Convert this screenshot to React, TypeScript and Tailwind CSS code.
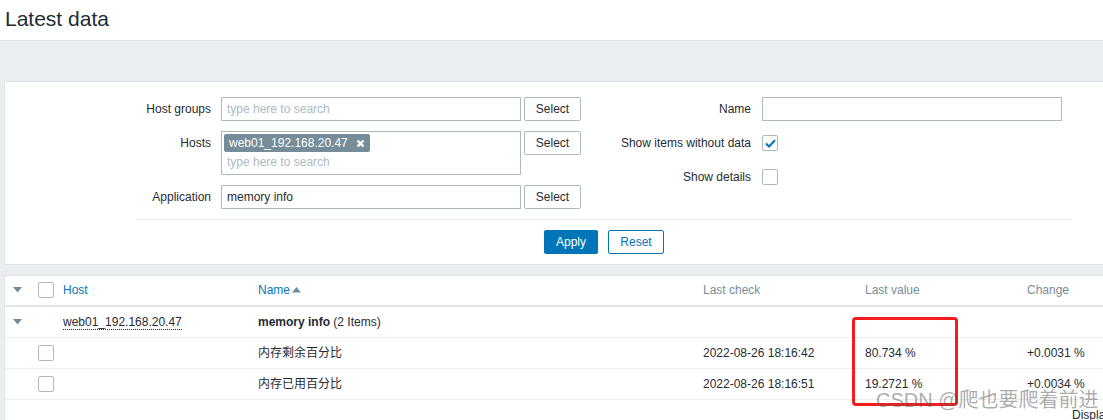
import React from "react";

const Arrow = () => (
  <svg width="9" height="6" viewBox="0 0 9 6" className="block">
    <polygon points="0,0 9,0 4.5,5.5" fill="#768d99" />
  </svg>
);

const Check = ({ checked = false }: { checked?: boolean }) => (
  <div className="w-[16px] h-[16px] border border-[#acbbc2] rounded-[2px] bg-white flex items-center justify-center">
    {checked && (
      <svg width="11" height="9" viewBox="0 0 11 9">
        <path d="M1 4.5 L4 7.5 L10 1.2" fill="none" stroke="#0275b8" strokeWidth="2" />
      </svg>
    )}
  </div>
);

const SelectBtn = () => (
  <button className="w-[57px] h-[24px] border border-[#acbbc2] rounded-[2px] bg-white text-[#1f2c33] text-[12px] leading-none">
    Select
  </button>
);

const Label = ({ children, w, pr }: { children: React.ReactNode; w: string; pr: string }) => (
  <div className={`${w} ${pr} text-right h-[24px] leading-[24px] shrink-0`}>{children}</div>
);

export default function App() {
  return (
    <div className="relative w-[1103px] h-[420px] overflow-hidden bg-[#ebeef0] text-[12px] text-[#1f2c33] font-['Liberation_Sans','Noto_Sans_CJK_SC',sans-serif]">
      {/* header */}
      <div className="h-[41px] bg-white border-b border-[#dfe4e7] flex items-center pl-[5px] pb-[4px]">
        <h1 className="text-[21px] leading-none text-[#1f2c33]">Latest data</h1>
      </div>

      {/* filter */}
      <div className="mt-[40px] ml-[4px] w-[1200px] bg-white border border-[#dfe4e7] pt-[15px] pb-[10px]">
        <div className="flex">
          <div className="flex flex-col gap-[10px]">
            <div className="flex">
              <div className="w-[216px] pr-[10px] text-right h-[24px] leading-[24px] shrink-0">Host groups</div>
              <div className="w-[300px] h-[24px] border border-[#acbbc2] pl-[5px] leading-[22px] text-[#acbbc2]">type here to search</div>
              <div className="ml-[3px]"><SelectBtn /></div>
            </div>
            <div className="flex">
              <div className="w-[216px] pr-[10px] text-right h-[24px] leading-[24px] shrink-0">Hosts</div>
              <div className="w-[300px] h-[44px] border border-[#acbbc2] pt-[2px] pl-[2px]">
                <div className="flex w-fit items-center h-[18px] bg-[#768d99] rounded-[2px] text-white pl-[5px] pr-[5px] gap-[8px]">
                  <span>web01_192.168.20.47</span>
                  <svg width="9" height="9" viewBox="0 0 9 9">
                    <path d="M1.5 1.5 L7.5 7.5 M7.5 1.5 L1.5 7.5" stroke="white" strokeWidth="2.4" />
                  </svg>
                </div>
                <div className="pl-[3px] h-[20px] leading-[20px] text-[#acbbc2]">type here to search</div>
              </div>
              <div className="ml-[3px]"><SelectBtn /></div>
            </div>
            <div className="flex">
              <div className="w-[216px] pr-[10px] text-right h-[24px] leading-[24px] shrink-0">Application</div>
              <div className="w-[300px] h-[24px] border border-[#acbbc2] pl-[5px] leading-[22px]">memory info</div>
              <div className="ml-[3px]"><SelectBtn /></div>
            </div>
          </div>
          <div className="flex flex-col gap-[10px]">
            <div className="flex">
              <Label w="w-[181px]" pr="pr-[11px]">Name</Label>
              <div className="w-[300px] h-[24px] border border-[#acbbc2]" />
            </div>
            <div className="flex items-center">
              <Label w="w-[181px]" pr="pr-[11px]">Show items without data</Label>
              <Check checked />
            </div>
            <div className="flex items-center">
              <Label w="w-[181px]" pr="pr-[11px]">Show details</Label>
              <Check />
            </div>
          </div>
        </div>
        <div className="mt-[10px] h-px bg-[#ebeef0] ml-[131px] w-[935px]" />
        <div className="mt-[10px] ml-[539px] flex gap-[10px]">
          <button className="w-[54px] h-[24px] bg-[#0275b8] text-white rounded-[2px] text-[12px] leading-none">Apply</button>
          <button className="w-[56px] h-[24px] border border-[#0275b8] text-[#0275b8] bg-white rounded-[2px] text-[12px] leading-none">Reset</button>
        </div>
      </div>

      {/* table */}
      <div className="mt-[10px] ml-[4px] w-[1200px] bg-white border-t border-l border-[#dfe4e7] h-[200px]">
        <div className="flex items-center h-[31px] pb-[1px] border-b-2 border-[#dfe4e7]">
          <div className="w-[28px] pl-[8px]"><Arrow /></div>
          <div className="w-[25px] pl-[5px]"><Check /></div>
          <div className="w-[195px] pl-[5px] text-[#0275b8]">Host</div>
          <div className="w-[445px] pl-[5px] text-[#0275b8] flex items-center">
            Name
            <svg width="9" height="6" viewBox="0 0 9 6" className="ml-[2px]">
              <polygon points="0,5.5 9,5.5 4.5,0" fill="#768d99" />
            </svg>
          </div>
          <div className="w-[162px] pl-[5px] text-[#768d99]">Last check</div>
          <div className="w-[162px] pl-[5px] text-[#768d99]">Last value</div>
          <div className="flex-1 pl-[5px] text-[#768d99]">Change</div>
        </div>
        <div className="flex items-center h-[31px] border-b border-[#ebeef0]">
          <div className="w-[28px] pl-[8px]"><Arrow /></div>
          <div className="w-[25px] pl-[5px]" />
          <div className="w-[195px] pl-[5px]">
            <span className="border-b border-dotted border-[#1f2c33]">web01_192.168.20.47</span>
          </div>
          <div className="w-[445px] pl-[5px]">
            <span className="font-bold">memory info</span> (2 Items)
          </div>
          <div className="w-[162px] pl-[5px]" />
          <div className="w-[162px] pl-[5px]" />
          <div className="flex-1 pl-[5px]" />
        </div>
        {[
          ["内存剩余百分比", "2022-08-26 18:16:42", "80.734 %", "+0.0031 %"],
          ["内存已用百分比", "2022-08-26 18:16:51", "19.2721 %", "+0.0034 %"],
        ].map((r) => (
          <div key={r[0]} className="flex items-center h-[31px] border-b border-[#ebeef0]">
            <div className="w-[28px]" />
            <div className="w-[25px] pl-[5px]"><Check /></div>
            <div className="w-[195px] pl-[5px]" />
            <div className="w-[445px] pl-[5px]">{r[0]}</div>
            <div className="w-[162px] pl-[5px]">{r[1]}</div>
            <div className="w-[162px] pl-[5px]">{r[2]}</div>
            <div className="flex-1 pl-[5px]">{r[3]}</div>
          </div>
        ))}
        <div className="pl-[1067px] pt-[8px] leading-[14px] whitespace-nowrap">Displaying 2 of 2 found</div>
      </div>

      {/* red annotation box */}
      <div className="absolute left-[852px] top-[317px] w-[106px] h-[89px] border-[3px] border-[#f41d1d] rounded-[4px]" />
      {/* watermark */}
      <div className="absolute left-[876px] top-[388px] text-[20px] leading-[24px] text-[rgba(90,90,90,0.5)] whitespace-nowrap">
        CSDN @爬也要爬着前进
      </div>
    </div>
  );
}
